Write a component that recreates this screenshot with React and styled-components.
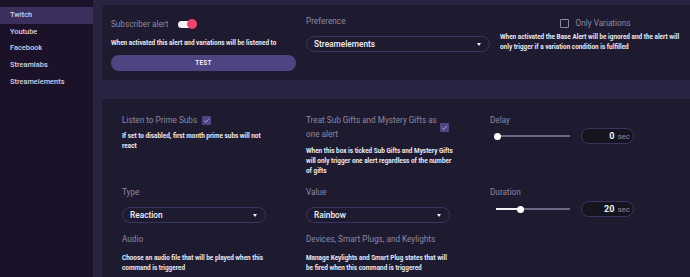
import React from "react";
import styled, { createGlobalStyle } from "styled-components";

const Global = createGlobalStyle`
  html, body { margin: 0; padding: 0; background: #292342; overflow: hidden; }
  body { font-family: Roboto, "Liberation Sans", sans-serif; }
  #root { width: 690px; height: 277px; }
`;

const Shell = styled.div`
  display: flex;
  width: 690px;
  height: 277px;
  overflow: hidden;
`;

const Sidebar = styled.nav`
  width: 93px;
  flex: none;
  background: #1b1229;
  padding-top: 7px;
  display: flex;
  flex-direction: column;
`;

const NavItem = styled.div`
  height: 16.7px;
  line-height: 16.7px;
  padding-left: 10px;
  font-size: 7.4px;
  font-weight: 500;
  color: #d6d2e2;
  background: ${(p) => (p.$active ? "#3b2f5d" : "transparent")};
`;

const Main = styled.main`
  flex: 1;
  padding: 5px 0 0 9px;
  display: flex;
  flex-direction: column;
  gap: 19px;
  overflow: hidden;
`;

const Panel = styled.section`
  width: 620px;
  flex: none;
  background: #1e1b31;
  border-radius: 4px;
  display: grid;
  box-sizing: border-box;
`;

const TopPanel = styled(Panel)`
  height: 75px;
  padding: 7px 0 0 9px;
  grid-template-columns: 185px 184px 190px;
  column-gap: 10px;
`;

const BottomPanel = styled(Panel)`
  height: 200px;
  padding: 14px 0 0 20px;
  grid-template-columns: 184px 184px 184px;
  grid-template-rows: 72px 47px auto;
`;

const Col = styled.div`
  display: flex;
  flex-direction: column;
  align-items: ${(p) => (p.$center ? "center" : "flex-start")};
`;

const Label = styled.div`
  font-size: 8.2px;
  line-height: 14px;
  color: #8d88a1;
  margin-top: ${(p) => p.$mt || 0}px;
  width: ${(p) => p.$w || "auto"};
`;

const Desc = styled.div`
  font-size: 6.4px;
  font-weight: 700;
  line-height: 10px;
  color: #ebe9f2;
  margin-top: ${(p) => p.$mt || 0}px;
  width: ${(p) => p.$w || "auto"};
`;

const Row = styled.div`
  display: flex;
  align-items: ${(p) => p.$align || "center"};
  gap: ${(p) => p.$gap || 0}px;
  margin-top: ${(p) => p.$mt || 0}px;
`;

const Toggle = styled.div`
  position: relative;
  width: 18px;
  height: 7px;
  border-radius: 4px;
  background: #f4f2f8;
  &::after {
    content: "";
    position: absolute;
    right: -1px;
    top: -1.5px;
    width: 10px;
    height: 10px;
    border-radius: 50%;
    background: #f2426f;
  }
`;

const Button = styled.button`
  width: 185px;
  height: 16px;
  margin-top: 7px;
  border: none;
  border-radius: 8px;
  background: #4e4481;
  color: #f2f0fa;
  font-family: inherit;
  font-size: 6.3px;
  font-weight: 700;
  letter-spacing: 0.3px;
  padding: 0;
`;

const Select = styled.div`
  box-sizing: border-box;
  width: ${(p) => p.$w}px;
  height: 16px;
  margin-top: ${(p) => p.$mt || 0}px;
  border: 1px solid #3b3460;
  border-radius: 8px;
  display: flex;
  align-items: center;
  justify-content: space-between;
  padding: 0 8px 0 7px;
  font-size: 8.3px;
  font-weight: 500;
  color: #f3f1f8;
  &::after {
    content: "";
    border-left: 2.5px solid transparent;
    border-right: 2.5px solid transparent;
    border-top: 3px solid #f3f1f8;
  }
`;

const Box = styled.div`
  box-sizing: border-box;
  width: 9px;
  height: 9px;
  border-radius: 1px;
  flex: none;
  border: ${(p) => (p.$checked ? "none" : "1px solid #8d88a1")};
  background: ${(p) => (p.$checked ? "#4e4481" : "transparent")};
  display: flex;
  align-items: center;
  justify-content: center;
`;

const Check = () => (
  <svg width="7" height="7" viewBox="0 0 10 10">
    <path d="M1.5 5.2 L4 7.6 L8.6 2.4" fill="none" stroke="#b4acd8" strokeWidth="1.3" />
  </svg>
);

const Checkbox = ({ checked }) => <Box $checked={checked}>{checked && <Check />}</Box>;

const SliderTrack = styled.div`
  position: relative;
  width: 74px;
  height: 1.5px;
  margin-left: 6px;
  background: #6c6784;
`;

const SliderFill = styled.div`
  position: absolute;
  left: 0;
  top: 0;
  height: 100%;
  background: #f3f1f8;
`;

const Thumb = styled.div`
  position: absolute;
  top: 50%;
  width: 7px;
  height: 7px;
  margin: -3.5px 0 0 -3.5px;
  border-radius: 50%;
  background: #ffffff;
`;

const Slider = ({ value, max }) => {
  const pct = (value / max) * 100;
  return (
    <SliderTrack>
      <SliderFill style={{ width: `${pct}%` }} />
      <Thumb style={{ left: `${pct === 0 ? 1.5 : pct}%` }} />
    </SliderTrack>
  );
};

const NumberBox = styled.div`
  box-sizing: border-box;
  width: 53px;
  height: 16px;
  border: 1px solid #3b3460;
  border-radius: 8px;
  background: #16141f;
  display: flex;
  align-items: center;
  justify-content: flex-end;
  gap: 3px;
  padding-right: 3px;
`;

const NumVal = styled.span`
  font-size: 9px;
  font-weight: 700;
  color: #f3f1f8;
`;

const Unit = styled.span`
  font-size: 8px;
  color: #8d88a1;
`;

const TimeControl = ({ value, max, mt }) => (
  <Row $gap={11} $mt={mt}>
    <Slider value={value} max={max} />
    <NumberBox>
      <NumVal>{value}</NumVal>
      <Unit>sec</Unit>
    </NumberBox>
  </Row>
);

export default function App() {
  const nav = ["Twitch", "Youtube", "Facebook", "Streamlabs", "Streamelements"];
  return (
    <>
      <Global />
      <Shell>
        <Sidebar>
          {nav.map((n, i) => (
            <NavItem key={n} $active={i === 0}>
              {n}
            </NavItem>
          ))}
        </Sidebar>
        <Main>
          <TopPanel>
            <Col>
              <Row $gap={10} $mt={5}>
                <Label>Subscriber alert</Label>
                <Toggle />
              </Row>
              <Desc $mt={7}>When activated this alert and variations will be listened to</Desc>
              <Button>TEST</Button>
            </Col>
            <Col>
              <Label $mt={2}>Preference</Label>
              <Select $w={184} $mt={8}>Streamelements</Select>
            </Col>
            <Col $center>
              <Row $gap={7} $mt={4}>
                <Checkbox />
                <Label>Only Variations</Label>
              </Row>
              <Desc $mt={2} $w="190px">
                When activated the Base Alert will be ignored and the alert will only trigger if a variation condition is fulfilled
              </Desc>
            </Col>
          </TopPanel>
          <BottomPanel>
            <Col>
              <Row $gap={5}>
                <Label>Listen to Prime Subs</Label>
                <Checkbox checked />
              </Row>
              <Desc $mt={4} $w="150px">If set to disabled, first month prime subs will not react</Desc>
            </Col>
            <Col>
              <Row $gap={0}>
                <Label $w="134px">Treat Sub Gifts and Mystery Gifts as one alert</Label>
                <Checkbox checked />
              </Row>
              <Desc $mt={5} $w="152px">
                When this box is ticked Sub Gifts and Mystery Gifts will only trigger one alert regardless of the number of gifts
              </Desc>
            </Col>
            <Col>
              <Label>Delay</Label>
              <TimeControl value={0} max={60} mt={1} />
            </Col>
            <Col>
              <Label>Type</Label>
              <Select $w={144} $mt={8}>Reaction</Select>
            </Col>
            <Col>
              <Label>Value</Label>
              <Select $w={144} $mt={8}>Rainbow</Select>
            </Col>
            <Col>
              <Label>Duration</Label>
              <TimeControl value={20} max={60} mt={2} />
            </Col>
            <Col>
              <Label>Audio</Label>
              <Desc $mt={7} $w="145px">Choose an audio file that will be played when this command is triggered</Desc>
            </Col>
            <Col>
              <Label>Devices, Smart Plugs, and Keylights</Label>
              <Desc $mt={7} $w="145px">Manage Keylights and Smart Plug states that will be fired when this command is triggered</Desc>
            </Col>
          </BottomPanel>
        </Main>
      </Shell>
    </>
  );
}
